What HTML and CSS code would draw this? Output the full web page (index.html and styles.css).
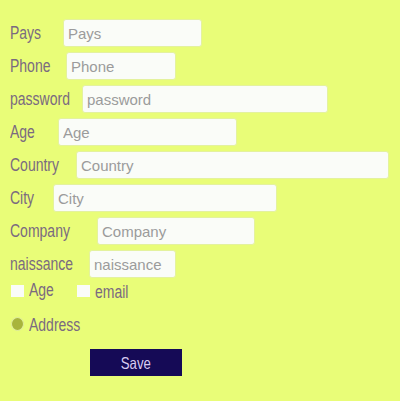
FILE: index.html
```html
<!DOCTYPE html>
<html>
<head>
<meta charset="utf-8">
<link rel="stylesheet" href="styles.css">
</head>
<body>
<form class="form">
  <div class="row r-pays"><label class="lbl">Pays</label><input class="inp" placeholder="Pays"></div>
  <div class="row r-phone"><label class="lbl">Phone</label><input class="inp" placeholder="Phone"></div>
  <div class="row r-password"><label class="lbl">password</label><input class="inp" placeholder="password"></div>
  <div class="row r-age"><label class="lbl">Age</label><input class="inp" placeholder="Age"></div>
  <div class="row r-country"><label class="lbl">Country</label><input class="inp" placeholder="Country"></div>
  <div class="row r-city"><label class="lbl">City</label><input class="inp" placeholder="City"></div>
  <div class="row r-company"><label class="lbl">Company</label><input class="inp" placeholder="Company"></div>
  <div class="row r-naissance"><label class="lbl">naissance</label><input class="inp" placeholder="naissance"></div>
  <div class="checks">
    <span class="box"></span><span class="clbl c-age">Age</span>
    <span class="box"></span><span class="clbl c-email">email</span>
  </div>
  <div class="radio-row"><span class="radio"></span><span class="clbl c-addr">Address</span></div>
  <div class="actions"><button type="button" class="save"><span class="save-t">Save</span></button></div>
</form>
</body>
</html>
```
FILE: styles.css
```css
html, body {
  margin: 0;
  padding: 0;
  background: #e9fd78;
}
body {
  width: 400px;
  height: 401px;
  font-family: "Liberation Sans", Arial, sans-serif;
  color: #7a6a80;
}
.form {
  display: flex;
  flex-direction: column;
  padding: 19px 0 0 10px;
}
.row {
  display: flex;
  align-items: center;
  height: 28px;
  margin-bottom: 5px;
}
/* condensed label type: drawn at 17.5px, squeezed to 80% width */
.lbl, .clbl {
  display: block;
  flex: none;
  font-size: 17.5px;
  line-height: 20px;
  white-space: nowrap;
  transform: scaleX(0.8);
  transform-origin: 0 50%;
}
.inp {
  box-sizing: border-box;
  flex: none;
  height: 28px;
  margin: 0;
  padding: 0 4px;
  border: 1px solid #e4f29e;
  border-radius: 3px;
  background: #fafcf8;
  font-family: "Liberation Sans", Arial, sans-serif;
  font-size: 15px;
  color: #888;
  outline: none;
}
.inp::placeholder { color: #9b9b9b; opacity: 1; }

.r-pays .lbl { width: 66.25px; margin-right: -13.25px; }
.r-pays .inp { width: 139px; }
.r-phone .lbl { width: 70px; margin-right: -14px; }
.r-phone .inp { width: 110px; }
.r-password .lbl { width: 90px; margin-right: -18px; }
.r-password .inp { width: 246px; }
.r-age .lbl { width: 60px; margin-right: -12px; }
.r-age .inp { width: 179px; }
.r-country .lbl { width: 82.5px; margin-right: -16.5px; }
.r-country .inp { width: 313px; }
.r-city .lbl { width: 53.75px; margin-right: -10.75px; }
.r-city .inp { width: 224px; }
.r-company .lbl { width: 108.75px; margin-right: -21.75px; }
.r-company .inp { width: 158px; }
.r-naissance .lbl { width: 98.75px; margin-right: -19.75px; }
.r-naissance .inp { width: 87px; }

.checks {
  display: flex;
  align-items: flex-start;
  height: 13px;
  margin-top: 2px;
}
.box {
  flex: none;
  width: 13px;
  height: 12px;
  background: #fafcf8;
  margin-left: 1px;
}
.c-age {
  margin: -5px 0 0 5px;
  width: 58.75px;
  margin-right: -11.75px;
}
.c-email { margin: -3px 0 0 5px; width: 50px; margin-right: -10px; }
.radio-row {
  display: flex;
  align-items: flex-start;
  height: 14px;
  margin-top: 19px;
}
.radio {
  box-sizing: border-box;
  flex: none;
  width: 13px;
  height: 14px;
  border-radius: 50%;
  background: #a8b43c;
  border: 1.5px solid #dfed9c;
  margin-left: 1px;
}
.c-addr { margin: -2px 0 0 5px; width: 70px; margin-right: -14px; }
.actions {
  display: flex;
  padding-left: 80px;
  margin-top: 18px;
}
.save {
  display: flex;
  align-items: center;
  justify-content: center;
  width: 92px;
  height: 27px;
  border: none;
  border-radius: 0;
  background: #150a56;
  padding: 0;
}
.save-t {
  display: block;
  color: #d9cdf2;
  font-family: "Liberation Sans", Arial, sans-serif;
  font-size: 16.5px;
  line-height: 20px;
  transform: scaleX(0.8);
}
```
